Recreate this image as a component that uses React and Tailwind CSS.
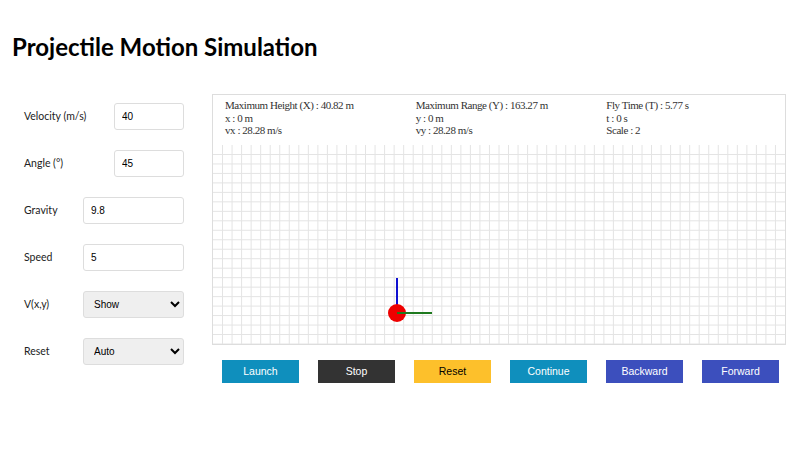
import React from 'react';

const fields = [
  { label: 'Velocity (m/s)', value: '40', wide: false },
  { label: 'Angle (°)', value: '45', wide: false },
  { label: 'Gravity', value: '9.8', wide: true },
  { label: 'Speed', value: '5', wide: true },
];

const buttons = [
  { text: 'Launch', cls: 'bg-[#0f8fbd] text-white' },
  { text: 'Stop', cls: 'bg-[#333333] text-white' },
  { text: 'Reset', cls: 'bg-[#fdc02b] text-black' },
  { text: 'Continue', cls: 'bg-[#0f8fbd] text-white' },
  { text: 'Backward', cls: 'bg-[#3c4fbd] text-white' },
  { text: 'Forward', cls: 'bg-[#3c4fbd] text-white' },
];

function Grid() {
  const w = 572;
  const h = 199;
  const cols = 60;
  const rows = 21;
  const cw = w / cols;
  const ch = h / rows;
  const lines = [];
  for (let i = 1; i < cols; i++) {
    lines.push(<line key={'v' + i} x1={i * cw} y1={0} x2={i * cw} y2={h} stroke="#e4e4e4" strokeWidth="1" />);
  }
  for (let j = 1; j <= rows; j++) {
    lines.push(<line key={'h' + j} x1={0} y1={j * ch} x2={w} y2={j * ch} stroke="#e4e4e4" strokeWidth="1" />);
  }
  return (
    <svg width={w} height={h} className="block">
      {lines}
      <line x1="184" y1="133" x2="184" y2="168" stroke="#1010d0" strokeWidth="2" />
      <circle cx="184" cy="168" r="9" fill="#ee0000" />
      <line x1="184" y1="168" x2="219" y2="168" stroke="#1f7a1f" strokeWidth="2" />
    </svg>
  );
}

export default function App() {
  return (
    <div className="w-[800px] h-[450px] bg-white overflow-hidden">
      <h1 className="pl-3 pt-[31px] text-[24px] leading-[32px] font-bold text-black font-['Lato',sans-serif]">
        Projectile Motion Simulation
      </h1>

      <div className="flex mt-[31px]">
        <div className="w-[200px] pl-6 pr-4 pt-[9px] flex flex-col gap-[20px] font-['Lato',sans-serif] text-[10.5px] text-[#222]">
          {fields.map((f) => (
            <div key={f.label} className="flex items-center justify-between h-[27px]">
              <span>{f.label}</span>
              <input
                readOnly
                value={f.value}
                className={(f.wide ? 'w-[101px]' : 'w-[70px]') + ' h-[27px] border border-[#dddddd] rounded-[3px] px-[7px] text-[10px] text-black font-[Arial,sans-serif]'}
              />
            </div>
          ))}
          <div className="flex items-center justify-between h-[27px]">
            <span>V(x,y)</span>
            <select className="w-[101px] h-[27px] bg-[#efefef] border border-[#dddddd] rounded-[3px] px-[6px] text-[10px] text-black font-['Liberation_Sans',sans-serif]">
              <option>Show</option>
            </select>
          </div>
          <div className="flex items-center justify-between h-[27px]">
            <span>Reset</span>
            <select className="w-[101px] h-[27px] bg-[#efefef] border border-[#dddddd] rounded-[3px] px-[6px] text-[10px] text-black font-['Liberation_Sans',sans-serif]">
              <option>Auto</option>
            </select>
          </div>
        </div>

        <div className="ml-3">
          <div className="w-[574px] border border-[#dddddd]">
            <div className="h-[50px] grid grid-cols-3 pt-[4px] font-['Liberation_Serif',serif] text-[11px] tracking-[-0.45px] leading-[12.5px] text-[#333]">
              <div className="pl-3">
                <div>Maximum Height (X) : 40.82 m</div>
                <div>x : 0 m</div>
                <div>vx : 28.28 m/s</div>
              </div>
              <div className="pl-3">
                <div>Maximum Range (Y) : 163.27 m</div>
                <div>y : 0 m</div>
                <div>vy : 28.28 m/s</div>
              </div>
              <div className="pl-3">
                <div>Fly Time (T) : 5.77 s</div>
                <div>t : 0 s</div>
                <div>Scale : 2</div>
              </div>
            </div>
            <Grid />
          </div>

          <div className="flex gap-[19px] pl-[10px] mt-[15px]">
            {buttons.map((b) => (
              <button
                key={b.text}
                className={b.cls + ' w-[77px] h-[23px] text-[10.5px] font-["Liberation_Sans",sans-serif]'}
              >
                {b.text}
              </button>
            ))}
          </div>
        </div>
      </div>
    </div>
  );
}
